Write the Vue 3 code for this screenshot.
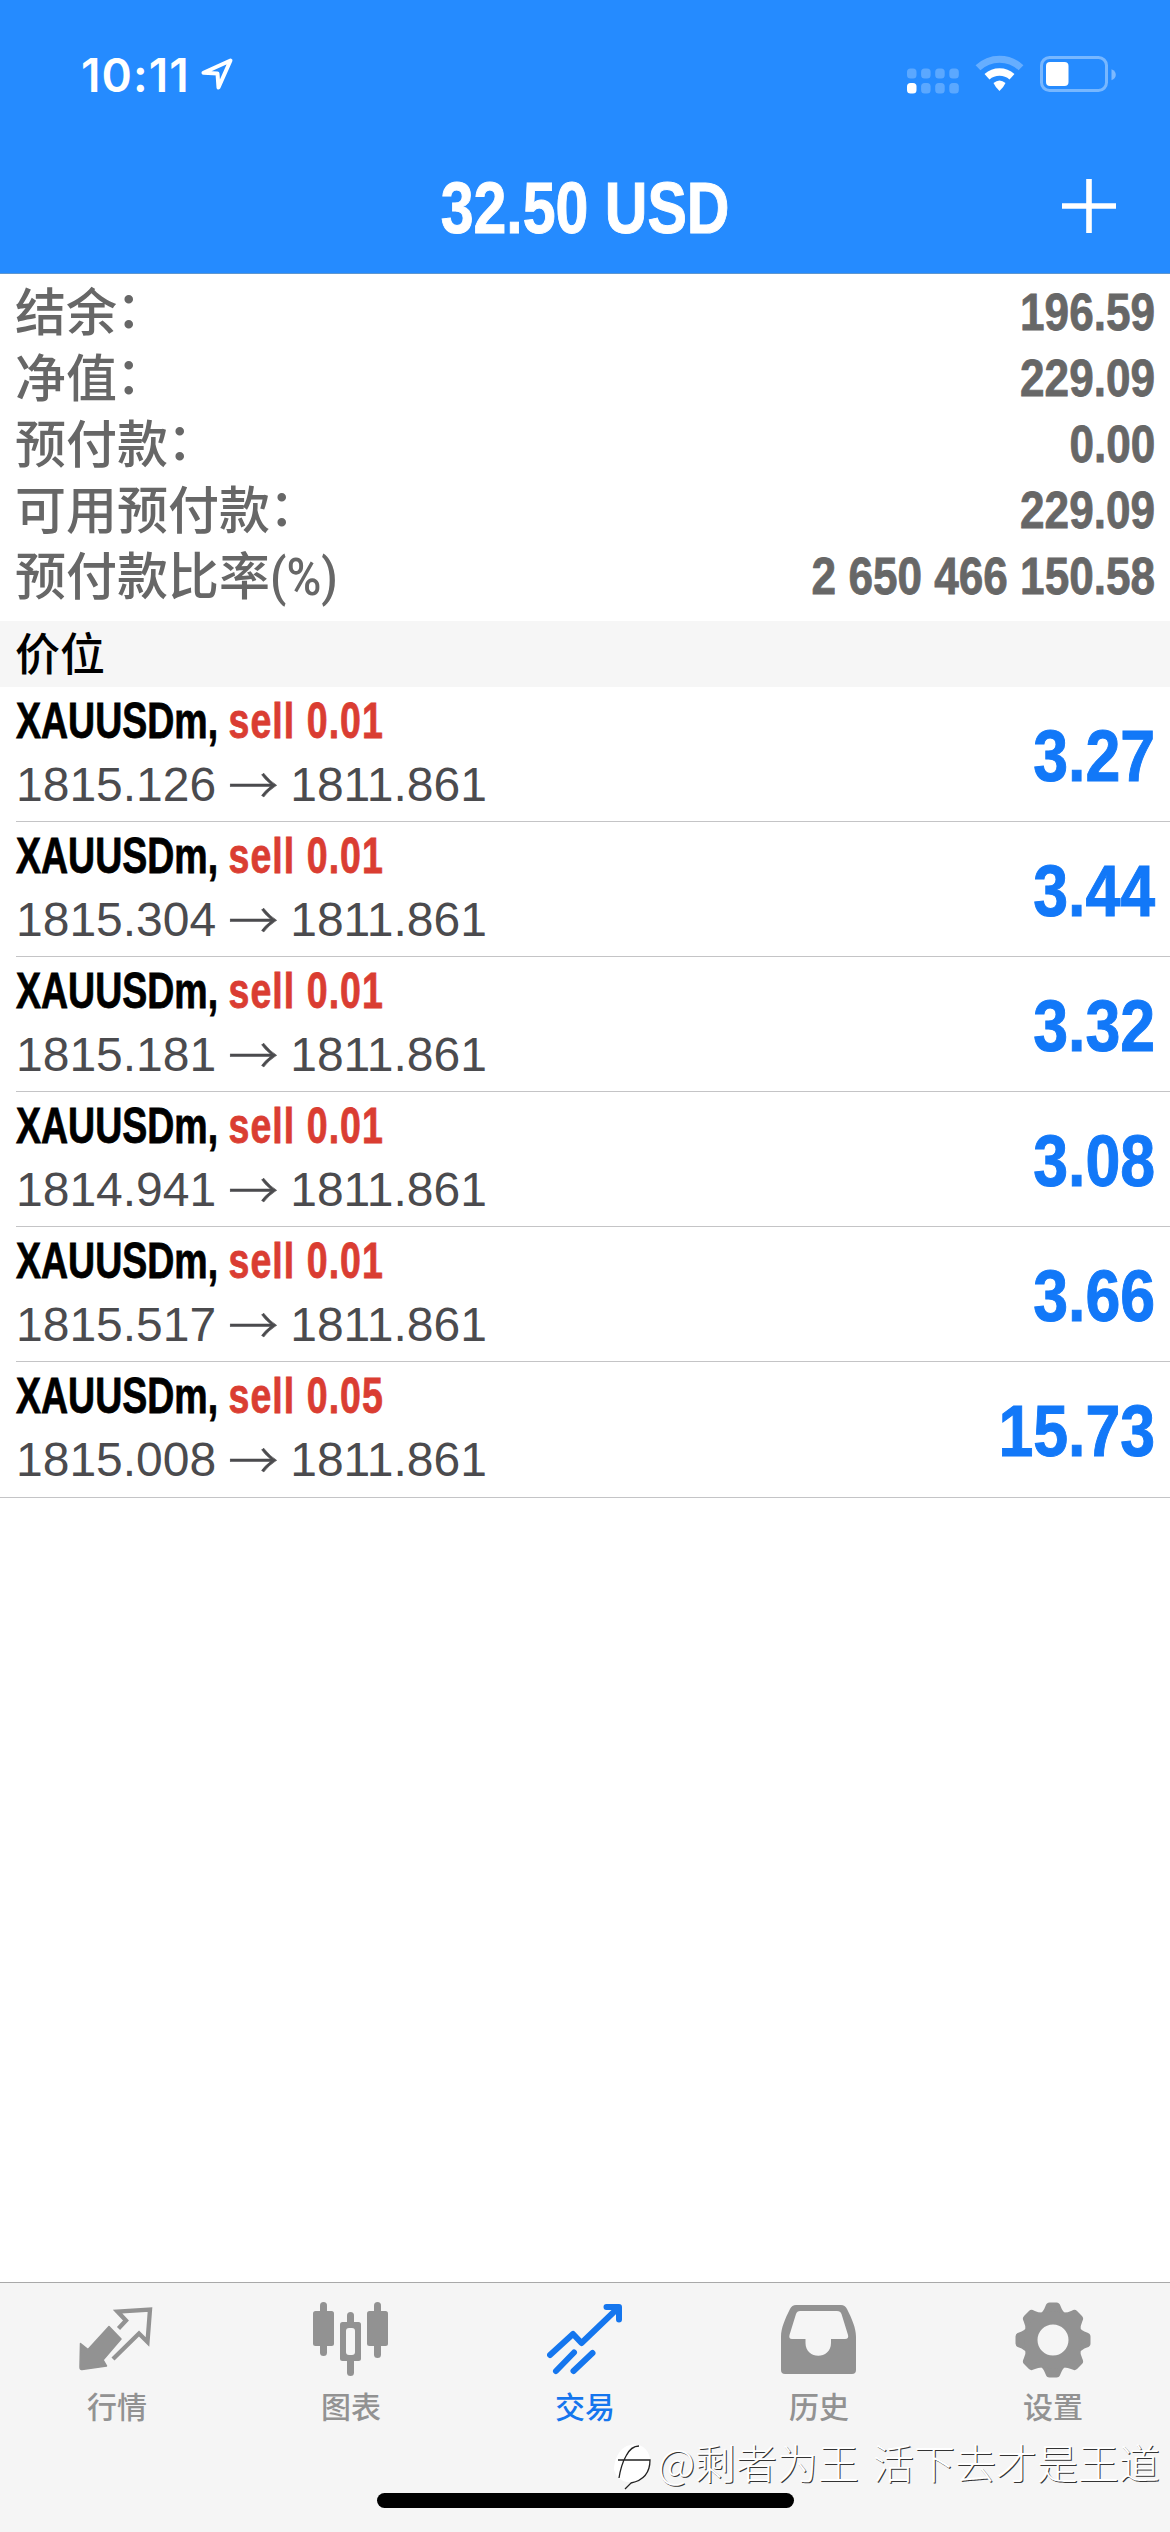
<script setup>
const summary = [
  { label: '结余', suffix: '：', value: '196.59' },
  { label: '净值', suffix: '：', value: '229.09' },
  { label: '预付款', suffix: '：', value: '0.00' },
  { label: '可用预付款', suffix: '：', value: '229.09' },
  { label: '预付款比率', suffix: '(%)', value: '2 650 466 150.58' },
]

const positions = [
  { volume: '0.01', open: '1815.126', profit: '3.27' },
  { volume: '0.01', open: '1815.304', profit: '3.44' },
  { volume: '0.01', open: '1815.181', profit: '3.32' },
  { volume: '0.01', open: '1814.941', profit: '3.08' },
  { volume: '0.01', open: '1815.517', profit: '3.66' },
  { volume: '0.05', open: '1815.008', profit: '15.73' },
]

const dots = [0, 1, 2, 3]
const teeth = [0, 45, 90, 135, 180, 225, 270, 315]
</script>

<template>
  <div class="screen">
    <header class="header">
      <div class="status">
        <div class="status-left">
          <span class="time">10:11</span>
          <svg class="locate" width="34" height="34" viewBox="0 0 34 34">
            <path d="M30.5 3.5 3.5 15.8 17.5 16.6 18.5 30.5Z" fill="none" stroke="#fff" stroke-width="4" stroke-linejoin="round" />
          </svg>
        </div>
        <svg class="indicators" width="212" height="44" viewBox="0 0 212 44">
          <g v-for="d in dots" :key="d" fill="#fff">
            <rect :x="3 + d * 14.1" y="16.5" width="9.5" height="10" rx="3.5" opacity=".25" />
            <rect :x="3 + d * 14.1" y="31" width="9.5" height="10.5" rx="3.5" :opacity="d === 0 ? 1 : 0.25" />
          </g>
          <g fill="none" stroke="#fff">
            <path d="M74 15.800A31 31 0 0 1 117 15.800" stroke-width="7" opacity=".3" />
            <path d="M83 24.800A19 19 0 0 1 108 24.800" stroke-width="7.500" />
          </g>
          <path d="M89.500 31Q95.500 26 101.500 31Q99.500 35.500 95.500 39Q91.500 35.500 89.500 31Z" fill="#fff" />
          <rect x="137.500" y="5.500" width="65" height="33" rx="8" fill="none" stroke="#fff" stroke-width="3" opacity=".38" />
          <path d="M207.500 17.200Q211.800 19 211.800 22.700Q211.800 26.500 207.500 28.300Z" fill="#fff" opacity=".4" />
          <rect x="142" y="10" width="22.500" height="24" rx="4" fill="#fff" />
        </svg>
      </div>
      <div class="nav">
        <span class="title">32.50 USD</span>
        <svg class="plus" width="54" height="54" viewBox="0 0 54 54">
          <path d="M27 0V54M0 27H54" stroke="#fff" stroke-width="5.600" />
        </svg>
      </div>
    </header>

    <section class="summary">
      <div v-for="s in summary" :key="s.label" class="sum-row">
        <span class="sum-label">{{ s.label }}<span :class="s.suffix === '：' ? 'colon' : 'percent'">{{ s.suffix }}</span></span>
        <span class="sum-value">{{ s.value }}</span>
      </div>
    </section>

    <h2 class="section">价位</h2>

    <main class="list">
      <div v-for="p in positions" :key="p.open" class="row">
        <div class="info">
          <div class="deal"><span class="symbol">XAUUSDm, </span><span class="side">sell {{ p.volume }}</span></div>
          <div class="prices">
            <span>{{ p.open }}</span><span class="arrow">→</span><span>1811.861</span>
          </div>
        </div>
        <span class="profit">{{ p.profit }}</span>
      </div>
    </main>

    <footer class="footer">
      <nav class="tabs">
        <div class="tab">
          <svg width="76" height="76" viewBox="0 0 76 76">
            <path d="M1.500 41.500 9 47.500 30 24.500 42 37 24 58 27.500 64 3 67.500Q1 68 1 65Z" fill="#929292" stroke="#929292" stroke-width="1.500" stroke-linejoin="round" />
            <path d="M39.500 26.500 47 18.500 38.500 9.500 71 7.500 68.500 40 60 31.500 34 57" fill="none" stroke="#929292" stroke-width="4.300" />
          </svg>
          <span>行情</span>
        </div>
        <div class="tab">
          <svg width="76" height="76" viewBox="0 0 76 76" fill="#929292">
            <rect x="7" y="0" width="7" height="54" rx="3.500" />
            <rect x="0" y="9" width="21" height="35" rx="2.500" />
            <rect x="61" y="0" width="7" height="56" rx="3.500" />
            <rect x="54" y="9" width="21" height="35" rx="2.500" />
            <rect x="34" y="10" width="7" height="18" rx="3.500" />
            <rect x="34" y="52" width="7" height="22" rx="3.500" />
            <rect x="27" y="20" width="21" height="39" rx="2.500" />
            <rect x="33" y="26" width="9" height="27" rx="3" fill="#f5f5f5" />
          </svg>
          <span>图表</span>
        </div>
        <div class="tab active">
          <svg width="76" height="76" viewBox="0 0 76 76" fill="none" stroke="#1576ee" stroke-width="6" stroke-linecap="round">
            <path d="M3 53 26 32 34.500 41 71 6" stroke-linejoin="round" />
            <path d="M59.500 5H72V17.500" stroke-linejoin="round" />
            <path d="M61 3.500H73.500V15Z" fill="#1576ee" stroke="none" />
            <path d="M9 69 27 50.500M26.500 69 45.500 51" />
          </svg>
          <span>交易</span>
        </div>
        <div class="tab">
          <svg width="76" height="76" viewBox="0 0 76 76">
            <path fill="#929292" fill-rule="evenodd" d="M15 3H60Q64 3 66 7C71 17 75 26 75 35V68Q75 72 71 72H4Q0 72 0 68V35C0 26 4 17 9 7Q11 3 15 3ZM19 9Q16 9 15 12L8.500 33Q7.500 37 11 37H24.500V41C24.500 58 50 58 50 41V37H64Q68 37 67 33L60.500 12Q59.500 9 56 9Z" />
          </svg>
          <span>历史</span>
        </div>
        <div class="tab">
          <svg width="76" height="76" viewBox="-38 -38 76 76">
            <path v-for="a in teeth" :key="a" :transform="`rotate(${a})`" d="M-13-26Q-9.500-28.500-7.500-34Q-6.500-37.500-3.500-37.500H3.500Q6.500-37.500 7.500-34Q9.500-28.500 13-26L8-18H-8Z" fill="#929292" />
            <circle r="22" fill="none" stroke="#929292" stroke-width="13" />
          </svg>
          <span>设置</span>
        </div>
      </nav>
      <div class="home"></div>
      <div class="watermark">
        <svg width="40" height="50" viewBox="0 0 40 50">
          <path d="M1 30C2 10 14 2 26 5C37 9 39 20 36 29C33 39 25 43 14 42Q4 40 1 30Z" fill="#fff" />
          <path d="M6 38Q8 25 13 16Q18 6 26 6M5 20H37Q37 39 18 43L12 49" fill="none" stroke="#222" stroke-width="1.300" />
        </svg>
        <span>@剩者为王 活下去才是王道</span>
      </div>
    </footer>
  </div>
</template>

<style>
body {
  margin: 0;
  background: #fff;
}
</style>

<style scoped>
.screen {
  width: 1170px;
  height: 2532px;
  display: flex;
  flex-direction: column;
  overflow: hidden;
  background: #fff;
  font-family: "Liberation Sans", "Noto Sans CJK SC", sans-serif;
}
.header {
  height: 274px;
  box-sizing: border-box;
  background: #258bff;
  color: #fff;
  border-bottom: 1px solid #5f97cf;
  flex: none;
}
.status {
  height: 139px;
  display: flex;
  justify-content: space-between;
  align-items: flex-start;
  padding: 52px 54px 0 81px;
  box-sizing: border-box;
}
.status-left {
  display: flex;
  align-items: flex-start;
}
.time {
  width: 119px;
  font: 600 46px/46px Inter, sans-serif;
  letter-spacing: 1.1px;
  white-space: nowrap;
}
.locate {
  margin-top: 5px;
}
.nav {
  height: 134px;
  display: grid;
  grid-template-columns: 108px 1fr 54px;
  align-items: center;
  padding-right: 54px;
}
.title {
  grid-column: 2;
  justify-self: center;
  font-size: 72px;
  font-weight: 700;
  line-height: 80px;
  padding-top: 4px;
  white-space: nowrap;
  -webkit-text-stroke: 1px currentColor;
  transform: scaleX(0.82);
}
.summary {
  height: 347px;
  box-sizing: border-box;
  padding: 6px 15px 11px 15px;
  color: #676767;
  flex: none;
}
.sum-row {
  height: 66px;
  display: flex;
  justify-content: space-between;
  align-items: flex-start;
}
.sum-label {
  font: 500 51px/59px "Noto Sans CJK SC", sans-serif;
  white-space: nowrap;
}
.colon {
  display: inline-block;
  transform: translate(-1px, -3px);
}
.percent {
  display: inline-block;
  font-family: Roboto, sans-serif;
  font-weight: 500;
  transform: scaleX(0.93);
  transform-origin: left;
}
.sum-value {
  font-size: 51px;
  font-weight: 700;
  line-height: 66px;
  white-space: nowrap;
  -webkit-text-stroke: 0.8px currentColor;
  transform: scaleX(0.865);
  transform-origin: right;
}
.section {
  height: 66px;
  margin: 0;
  padding-left: 15px;
  box-sizing: border-box;
  background: #f6f6f6;
  color: #000;
  font: 500 45px/62px "Noto Sans CJK SC", sans-serif;
  flex: none;
}
.list {
  padding-left: 16px;
}
.row {
  height: 135px;
  box-sizing: border-box;
  display: flex;
  justify-content: space-between;
  padding-right: 15px;
  border-bottom: 1px solid #c4c4c6;
}
.row:last-child {
  height: 136px;
  margin-left: -16px;
  padding-left: 16px;
}
.deal {
  width: 480px;
  font-size: 50px;
  font-weight: 700;
  line-height: 68px;
  white-space: pre;
  -webkit-text-stroke: 0.8px currentColor;
  transform: scaleX(0.75);
  transform-origin: left;
}
.symbol {
  color: #000;
}
.side {
  color: #da3d32;
  letter-spacing: 1.4px;
}
.prices {
  display: flex;
  font-size: 48px;
  line-height: 60px;
  color: #4b4b4e;
  white-space: nowrap;
}
.arrow {
  width: 74px;
  text-align: center;
  font-family: "Noto Sans CJK SC", sans-serif;
  font-weight: 300;
  font-size: 50px;
  line-height: 54px;
  -webkit-text-stroke: 0.6px currentColor;
}
.profit {
  font-size: 72px;
  font-weight: 700;
  line-height: 138px;
  color: #1278f8;
  -webkit-text-stroke: 1px currentColor;
  transform: scaleX(0.87);
  transform-origin: right;
}
.footer {
  position: relative;
  margin-top: auto;
  height: 250px;
  box-sizing: border-box;
  border-top: 1px solid #a9a9a9;
  background: #f5f5f5;
  flex: none;
}
.tabs {
  display: grid;
  grid-template-columns: repeat(5, 1fr);
  padding-top: 19px;
}
.tab {
  display: flex;
  flex-direction: column;
  align-items: center;
  color: #929292;
  font: 500 30px/44px "Noto Sans CJK SC", sans-serif;
}
.tab span {
  margin-top: 5px;
}
.active {
  color: #1576ee;
}
.home {
  position: absolute;
  left: 377px;
  top: 210px;
  width: 417px;
  height: 15px;
  border-radius: 8px;
  background: #000;
}
.watermark {
  position: absolute;
  right: 10px;
  top: 157px;
  display: flex;
  align-items: center;
  gap: 5px;
  color: #fff;
  font: 300 41px/50px "Noto Sans CJK SC", sans-serif;
  white-space: nowrap;
  word-spacing: 5px;
  text-shadow: 1px 1px 0 #333;
}
.watermark span {
  transform: translateY(-4px);
}
</style>
